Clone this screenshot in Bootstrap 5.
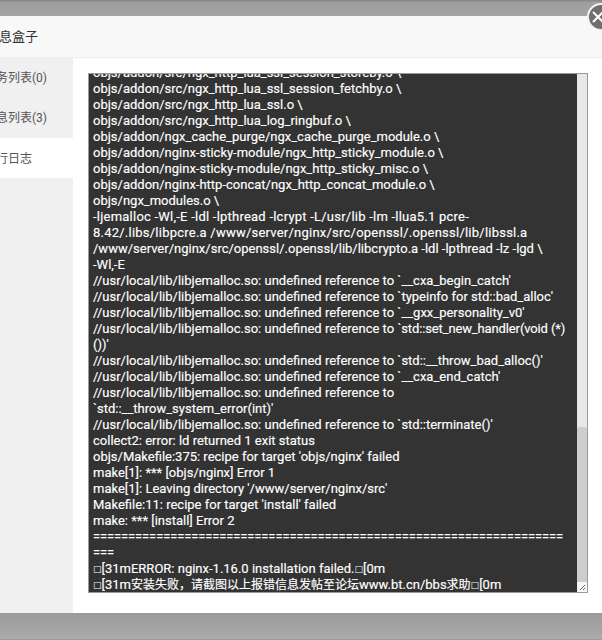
<!DOCTYPE html>
<html lang="zh"><head><meta charset="utf-8">
<link href="https://cdn.jsdelivr.net/npm/bootstrap@5.3.0/dist/css/bootstrap.min.css" rel="stylesheet">
<style>
html,body{margin:0;height:640px;overflow:hidden}
body{font-family:Roboto,"Noto Sans CJK SC",sans-serif;background:#a8a8a8;color:#555}
.shade{height:16px;background:linear-gradient(#8f8f8f,#9e9e9e 10%,#a3a3a3);border-top:1px solid #888}
.shade-b{height:27px;background:linear-gradient(#9b9b9b,#ababab);border-bottom:1px solid #999}
.dlg{height:597px;background:#fff;position:relative}
.dlg-title{height:42px;background:#f8f8f8;border-bottom:1px solid #eee;font-size:13px;line-height:41px;color:#333;margin-left:-14px}
.dlg-body{height:555px}
.side{width:73px;background:#f0f0f0;font-size:12px;color:#555;overflow:hidden;flex:none}
.side-item{height:40px;line-height:41px;white-space:nowrap;margin-left:-16px}
.side-item.on{background:#fff;margin-left:0;line-height:42px}
.side-item.on span{margin-left:-16px}
.logbox{width:500px;height:520px;margin:15px 0 0 15px;background:#333;border:1px solid #999;overflow:hidden;flex:none}
.logtext{flex:1;margin:-9.5px 0 0;padding-left:4px;color:#fff;font-size:13px;line-height:16px;white-space:pre;overflow:hidden;-webkit-text-stroke:.15px #fff}
.cjk{font-size:12px}
.box{font-family:"DejaVu Sans",sans-serif;font-size:9px;vertical-align:1px;-webkit-text-stroke:0}
.eq{letter-spacing:-.12px}
.wide1{letter-spacing:.23px}
.tight{letter-spacing:-.13px}
.sbar{width:10px;flex:none;background:#e8e8e8;position:relative}
.sbar-t{position:absolute;left:0;right:0;top:353px;bottom:10px;background:#cdcdcd;border-radius:3px 3px 0 0}
.grip{position:absolute;right:0;bottom:0;width:10px;height:10px;background:#f6f6f6;display:block}
.xbtn{position:absolute;left:587px;top:-13px;width:28px;height:28px;display:block}
</style></head><body>
<div class="shade"></div>
<div class="dlg">
<div class="dlg-title">消息盒子</div>
<div class="dlg-body d-flex">
<div class="side">
<div class="side-item">任务列表(0)</div>
<div class="side-item">消息列表(3)</div>
<div class="side-item on"><span>执行日志</span></div>
</div>
<div class="logbox d-flex">
<div class="logtext">objs/addon/src/ngx_http_lua_ssl_session_storeby.o \
objs/addon/src/ngx_http_lua_ssl_session_fetchby.o \
objs/addon/src/ngx_http_lua_ssl.o \
objs/addon/src/ngx_http_lua_log_ringbuf.o \
objs/addon/ngx_cache_purge/ngx_cache_purge_module.o \
objs/addon/nginx-sticky-module/ngx_http_sticky_module.o \
objs/addon/nginx-sticky-module/ngx_http_sticky_misc.o \
objs/addon/nginx-http-concat/ngx_http_concat_module.o \
objs/ngx_modules.o \
<span class="wide1">-ljemalloc -Wl,-E -ldl -lpthread -lcrypt -L/usr/lib -lm -llua5.1 pcre-</span>
<span class="wide1">8.42/.libs/libpcre.a /www/server/nginx/src/openssl/.openssl/lib/libssl.a</span>
/www/server/nginx/src/openssl/.openssl/lib/libcrypto.a -ldl -lpthread -lz -lgd \
-Wl,-E
//usr/local/lib/libjemalloc.so: undefined reference to `__cxa_begin_catch'
//usr/local/lib/libjemalloc.so: undefined reference to `typeinfo for std::bad_alloc'
//usr/local/lib/libjemalloc.so: undefined reference to `__gxx_personality_v0'
//usr/local/lib/libjemalloc.so: undefined reference to <span class="tight">`std::set_new_handler(void (*)</span>
())'
//usr/local/lib/libjemalloc.so: undefined reference to `std::__throw_bad_alloc()'
//usr/local/lib/libjemalloc.so: undefined reference to `__cxa_end_catch'
//usr/local/lib/libjemalloc.so: undefined reference to
`std::__throw_system_error(int)'
//usr/local/lib/libjemalloc.so: undefined reference to `std::terminate()'
collect2: error: ld returned 1 exit status
objs/Makefile:375: recipe for target 'objs/nginx' failed
make[1]: *** [objs/nginx] Error 1
make[1]: Leaving directory '/www/server/nginx/src'
Makefile:11: recipe for target 'install' failed
make: *** [install] Error 2
<span class="eq">===================================================================</span>
<span class="eq">===</span>
<span class="box">□</span>[31mERROR: nginx-1.16.0 installation failed.<span class="box">□</span>[0m
<span class="box">□</span>[31m<span class="cjk">安装失败，请截图以上报错信息发帖至论坛</span>www.bt.cn/bbs<span class="cjk">求助</span><span class="box">□</span>[0m</div>
<div class="sbar"><div class="sbar-t"></div>
<svg class="grip" viewBox="0 0 10 10"><g fill="#666"><rect x="7" y="3" width="1" height="1"/><rect x="6" y="4" width="1" height="1"/><rect x="5" y="5" width="1" height="1"/><rect x="4" y="6" width="1" height="1"/><rect x="3" y="7" width="1" height="1"/><rect x="7" y="6" width="1" height="1"/><rect x="6" y="7" width="1" height="1"/></g></svg>
</div>
</div>
</div>
<svg class="xbtn" viewBox="0 0 28 28"><circle cx="14" cy="14" r="13" fill="#6e6e6e" stroke="#f2f2f2" stroke-width="2"/><path d="M6 9l10 10M16 9L6 19" stroke="#fff" stroke-width="2" fill="none"/></svg>
</div>
<div class="shade-b"></div>
<script src="https://cdn.jsdelivr.net/npm/bootstrap@5.3.0/dist/js/bootstrap.bundle.min.js"></script>
</body></html>
